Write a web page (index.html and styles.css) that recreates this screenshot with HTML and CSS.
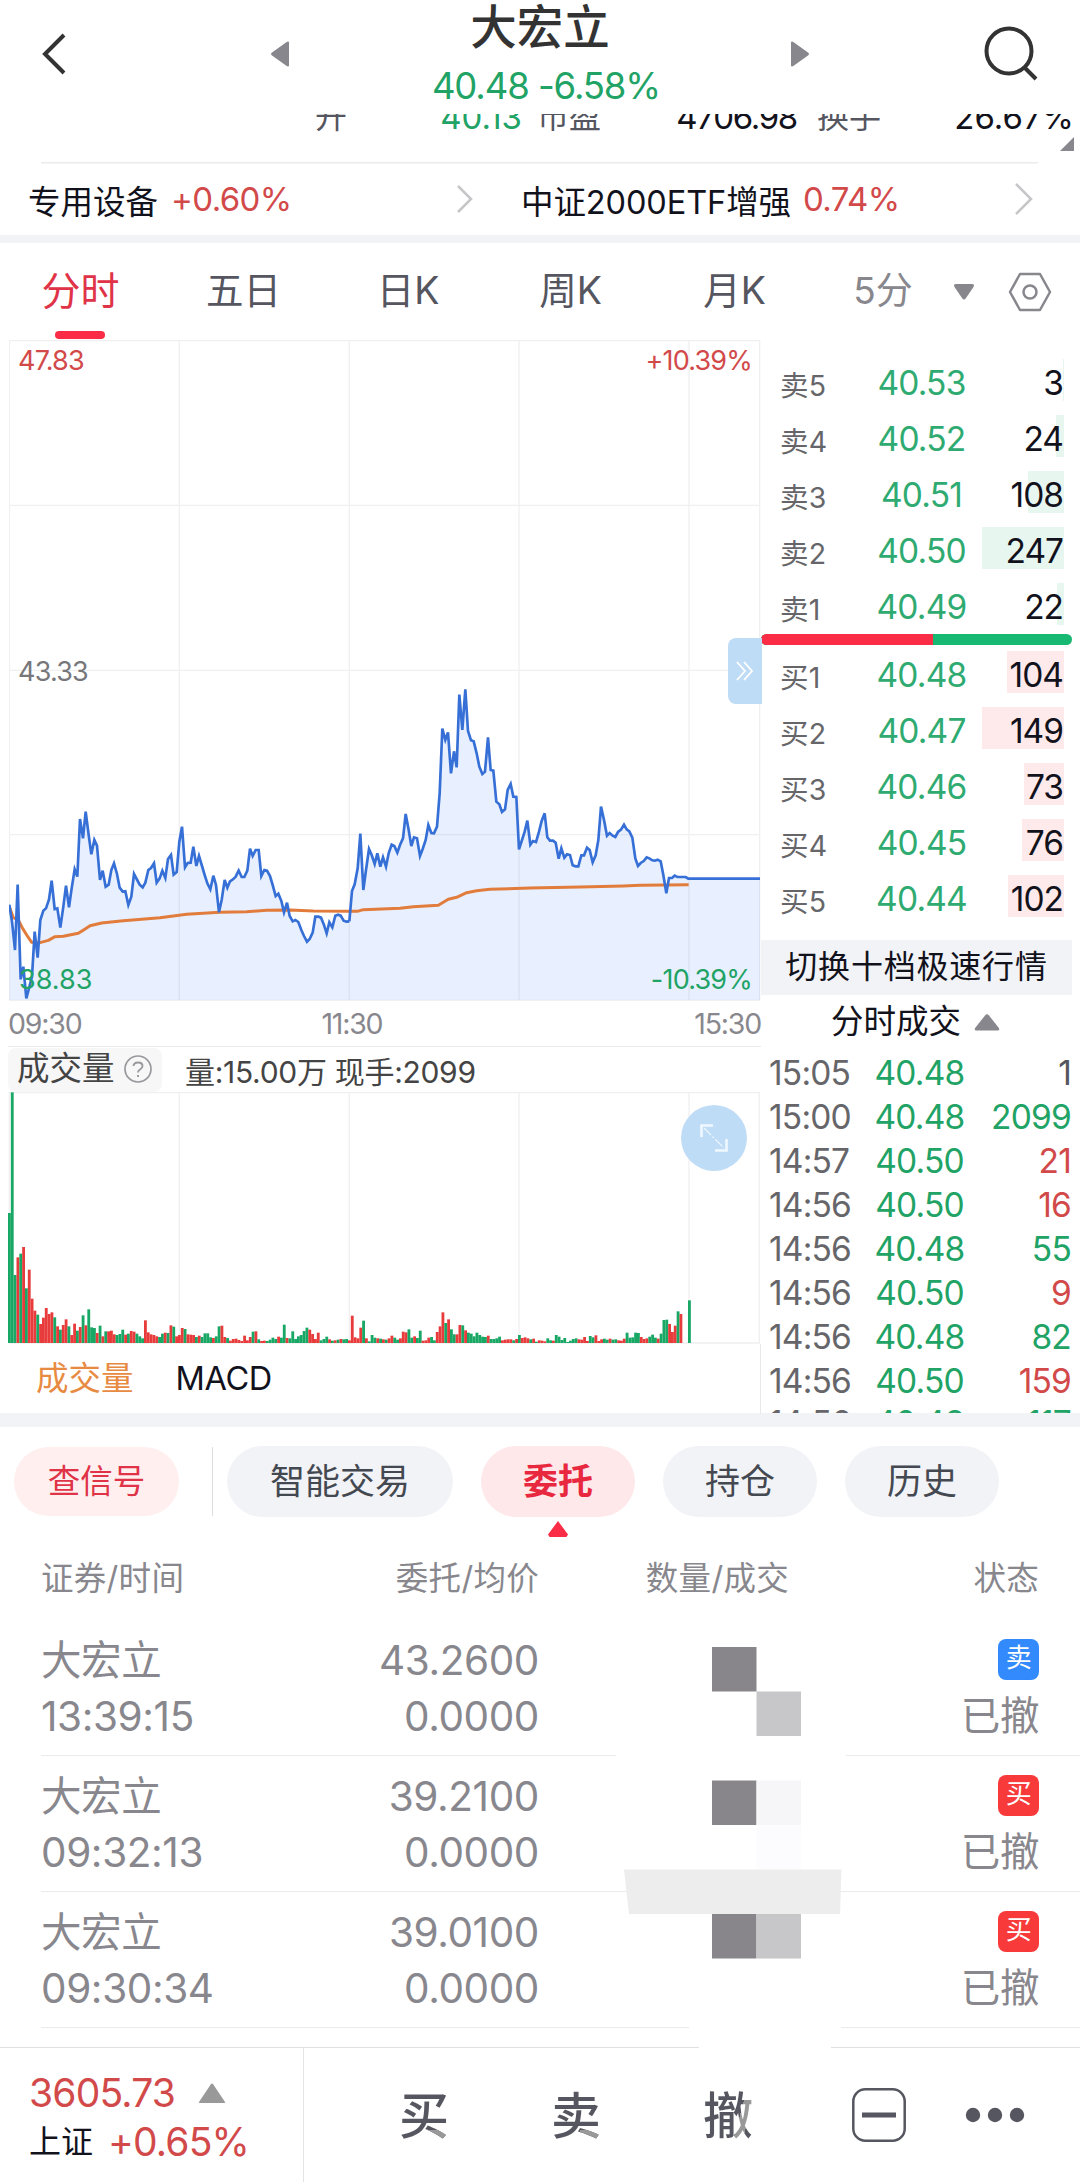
FILE: index.html
```html
<!DOCTYPE html>
<html lang="zh-CN">

<head>
    <meta charset="UTF-8">
    <meta name="viewport" content="width=device-width, initial-scale=1.0">
    <title>大宏立</title>
    <link rel="stylesheet" href="styles.css">
</head>

<body>
    <header class="header">
        <svg class="back" width="30" height="44" viewBox="0 0 30 44"><path d="M25 3 L6 22 L25 41" fill="none" stroke="#333" stroke-width="4"/></svg>
        <svg class="prev" width="20" height="28" viewBox="0 0 20 28"><path d="M19 2 V26 Q18 27 16 25.500 L2 15.500 Q0 14 2 12.500 L16 2.500 Q18 1 19 2Z" fill="#88878d"/></svg>
        <div class="title">
            <h1>大宏立</h1>
            <div class="quote green">40.48 -6.58%</div>
        </div>
        <svg class="next" width="20" height="28" viewBox="0 0 20 28"><path d="M1 2 V26 Q2 27 4 25.500 L18 15.500 Q20 14 18 12.500 L4 2.500 Q2 1 1 2Z" fill="#88878d"/></svg>
        <svg class="search" width="56" height="56" viewBox="0 0 56 56"><circle cx="26" cy="26" r="22.500" fill="none" stroke="#333" stroke-width="4"/><path d="M41 42 L53 54" stroke="#333" stroke-width="4"/></svg>
    </header>

    <!-- row scrolled half under the header -->
    <div class="stats">
        <span class="s-label">开</span>
        <span class="s-val green">40.13</span>
        <span class="s-label pe">市盈</span>
        <span class="s-val long">4706.98</span>
        <span class="s-label turn">换手</span>
        <span class="s-val last">26.67%</span>
        <i class="corner"></i>
    </div>

    <div class="sectors">
        <div class="sector">
            <span>专用设备</span><b class="red sec-a">+0.60%</b>
            <svg width="18" height="32" viewBox="0 0 18 32"><path d="M2 3 L15 16 L2 29" fill="none" stroke="#c6c6c8" stroke-width="2.500"/></svg>
        </div>
        <div class="sector etf">
            <span>中证2000ETF增强</span><b class="red">0.74%</b>
            <svg width="19" height="34" viewBox="0 0 19 34"><path d="M2 2 L17 17 L2 32" fill="none" stroke="#c6c6c8" stroke-width="2.500"/></svg>
        </div>
    </div>

    <nav class="periods">
        <a class="active">分时</a>
        <a>五日</a>
        <a>日K</a>
        <a>周K</a>
        <a>月K</a>
        <a class="minute">5分</a>
        <svg class="drop" width="22" height="18" viewBox="0 0 22 18"><path d="M3 1 H19 Q22 1 20.500 4 L13 15 Q11 18 9 15 L1.500 4 Q0 1 3 1Z" fill="#88878d"/></svg>
        <svg class="gear" width="44" height="40" viewBox="0 0 44 40"><path d="M12 2 H32 L42 20 L32 38 H12 L2 20Z" fill="none" stroke="#88878d" stroke-width="2.500" stroke-linejoin="round"/><circle cx="22" cy="20" r="6.500" fill="none" stroke="#88878d" stroke-width="2.500"/></svg>
    </nav>

    <main class="market">
        <section class="charts">
            <div class="price-chart">
                <svg id="price" width="752" height="661" viewBox="27 0 2256 1983">
                    <g class="grid">
                        <path d="M28 1.500 H2280 M28 496 H2280 M28 991 H2280 M28 1484 H2280 M28 1981 H2280"/>
                        <path d="M28.500 0 V1983 M538 0 V1983 M1048 0 V1983 M1557 0 V1983 M2067 0 V1983 M2279 0 V1983"/>
                    </g>
                </svg>
                <span class="lbl top-l red">47.83</span>
                <span class="lbl top-r red">+10.39%</span>
                <span class="lbl mid-l">43.33</span>
                <span class="lbl bot-l green">38.83</span>
                <span class="lbl bot-r green">-10.39%</span>
                <div class="fold"><svg width="20" height="20" viewBox="0 0 20 20"><path d="M2 1 L10 10 L2 19 M9 1 L17 10 L9 19" fill="none" stroke="#fff" stroke-width="1.800"/></svg></div>
            </div>
            <div class="times"><span>09:30</span><span class="noon">11:30</span><span>15:30</span></div>
            <div class="vol-head">
                <div class="chip">成交量<svg width="28" height="28" viewBox="0 0 28 28"><circle cx="14" cy="14" r="13" fill="none" stroke="#99989c" stroke-width="1.700"/><path d="M9.500 11 Q9.500 7.500 14 7.500 Q18.500 7.500 18.500 11 Q18.500 13 16 14.500 Q14 15.700 14 17.500 M14 20 V22" fill="none" stroke="#99989c" stroke-width="1.900"/></svg></div>
                <span>量:15.00万 现手:2099</span>
            </div>
            <div class="vol-chart">
                <svg id="volume" width="752" height="252" viewBox="24 0 2256 756">
                    <path class="grid" d="M28 2 H2280 M28 753 H2280 M28 0 V754 M538 0 V754 M1048 0 V754 M1557 0 V754 M2067 0 V754 M2278 0 V754"/>
                </svg>
                <div class="expand"><svg width="32" height="32" viewBox="0 0 32 32"><path d="M15 3.500 H3.500 V15 M17 28.500 H28.500 V17" fill="none" stroke="#f0f8ff" stroke-width="2.600"/><path d="M6 6 L26 26" stroke="#f0f8ff" stroke-width="1.200" stroke-dasharray="10 2 2 2"/></svg></div>
            </div>
            <div class="indicators"><span class="orange">成交量</span><span>MACD</span></div>
        </section>

        <aside class="depth">
            <div class="levels">
                <div class="level sell"><span>卖5</span><b>40.53</b><em><i style="width:1px"></i>3</em></div>
                <div class="level sell"><span>卖4</span><b>40.52</b><em><i style="width:8px"></i>24</em></div>
                <div class="level sell"><span>卖3</span><b>40.51</b><em><i style="width:36px"></i>108</em></div>
                <div class="level sell"><span>卖2</span><b>40.50</b><em><i style="width:82px"></i>247</em></div>
                <div class="level sell"><span>卖1</span><b>40.49</b><em><i style="width:7px"></i>22</em></div>
            </div>
            <div class="ratio"><i></i></div>
            <div class="levels">
                <div class="level buy"><span>买1</span><b>40.48</b><em><i style="width:57px"></i>104</em></div>
                <div class="level buy"><span>买2</span><b>40.47</b><em><i style="width:82px"></i>149</em></div>
                <div class="level buy"><span>买3</span><b>40.46</b><em><i style="width:40px"></i>73</em></div>
                <div class="level buy"><span>买4</span><b>40.45</b><em><i style="width:42px"></i>76</em></div>
                <div class="level buy"><span>买5</span><b>40.44</b><em><i style="width:56px"></i>102</em></div>
            </div>
            <div class="switch">切换十档极速行情</div>
            <div class="ticks-title">分时成交<svg width="26" height="18" viewBox="0 0 26 18"><path d="M2.500 17.500 Q-.5 17.500 1.500 14.500 L11 2.500 Q13 0 15 2.500 L24.500 14.500 Q26.500 17.500 23.500 17.500Z" fill="#88878d"/></svg></div>
            <div class="ticks">
                <div class="tick"><span>15:05</span><b>40.48</b><em class="gray">1</em></div>
                <div class="tick"><span>15:00</span><b>40.48</b><em class="green">2099</em></div>
                <div class="tick"><span>14:57</span><b>40.50</b><em class="red">21</em></div>
                <div class="tick"><span>14:56</span><b>40.50</b><em class="red">16</em></div>
                <div class="tick"><span>14:56</span><b>40.48</b><em class="green">55</em></div>
                <div class="tick"><span>14:56</span><b>40.50</b><em class="red">9</em></div>
                <div class="tick"><span>14:56</span><b>40.48</b><em class="green">82</em></div>
                <div class="tick"><span>14:56</span><b>40.50</b><em class="red">159</em></div>
                <div class="tick"><span>14:56</span><b>40.48</b><em class="green">117</em></div>
            </div>
        </aside>
    </main>

    <nav class="trade-tabs">
        <a class="signal">查信号</a>
        <i class="sep"></i>
        <a class="wide">智能交易</a>
        <a class="active">委托</a>
        <a>持仓</a>
        <a>历史</a>
    </nav>

    <section class="orders">
        <div class="row head"><span>证券/时间</span><span class="r">委托/均价</span><span class="c">数量/成交</span><span class="r">状态</span></div>
        <div class="row">
            <div>大宏立<br>13:39:15</div>
            <div class="r">43.2600<br>0.0000</div>
            <div></div>
            <div class="r state"><i class="badge blue">卖</i>已撤</div>
        </div>
        <div class="row">
            <div>大宏立<br>09:32:13</div>
            <div class="r">39.2100<br>0.0000</div>
            <div></div>
            <div class="r state"><i class="badge">买</i>已撤</div>
        </div>
        <div class="row">
            <div>大宏立<br>09:30:34</div>
            <div class="r">39.0100<br>0.0000</div>
            <div></div>
            <div class="r state"><i class="badge">买</i>已撤</div>
        </div>
        <!-- blocks hiding the quantities -->
        <svg class="mosaic" width="230" height="422" viewBox="616 1640 230 422">
            <path fill="#fff" d="M616 1640 H846 V1780 H616Z M689 2020 H841 V2035 H689Z M699 2040 H831 V2062 H699Z"/>
            <path fill="#88868b" d="M712 1647 H756.500 V1691.500 H712Z M712 1780.500 H756.500 V1825 H712Z M712 1914 H756.500 V1958.500 H712Z"/>
            <path fill="#c7c6c8" d="M756.500 1691.500 H801 V1736 H756.500Z M756.500 1914 H801 V1958.500 H756.500Z"/>
            <path fill="#f6f6f9" d="M756.500 1780.500 H801 V1825 H756.500Z"/>
            <path fill="#fcfbfe" d="M756.500 1825 H801 V1869.500 H756.500Z"/>
            <path fill="#ededed" d="M624 1869.500 H841.500 L840 1914 H629Z"/>
        </svg>
    </section>

    <footer class="bottom">
        <div class="index">
            <div class="red">3605.73 <svg width="28" height="20" viewBox="0 0 28 20"><path d="M1 19 L13 1 Q14 0 15 1 L27 19 Q28 20 26 20 H2 Q0 20 1 19Z" fill="#999"/></svg></div>
            <div class="red pct"><span>上证</span>+0.65%</div>
        </div>
        <div class="actions">
            <a class="glyph">买</a>
            <a class="glyph">卖</a>
            <a class="glyph che">撤</a>
            <svg class="minus" width="54" height="54" viewBox="0 0 54 54"><rect x="1.300" y="1.300" width="51.400" height="51.400" rx="12" fill="none" stroke="#55565f" stroke-width="2.500"/><path d="M10 27 H44" stroke="#55565f" stroke-width="5"/></svg>
            <svg class="dots" width="60" height="16" viewBox="0 0 60 16"><g fill="#55565f"><circle cx="8" cy="8" r="7.200"/><circle cx="30" cy="8" r="7.200"/><circle cx="52" cy="8" r="7.200"/></g></svg>
        </div>
    </footer>

    <script src="chart.js"></script>
</body>

</html>
```

FILE: styles.css
```css
* {
    box-sizing: border-box;
}

body {
    margin: 0;
    background-color: #fff;
    color: #12121c;
    font-family: Inter, 'Noto Sans CJK SC', sans-serif;
    font-weight: 400;
    width: 1080px;
    height: 2182px;
    overflow: hidden;
}

b,
em,
i,
h1 {
    font-weight: 400;
    font-style: normal;
    margin: 0;
}

svg {
    display: block;
    flex: none;
}

.green {
    color: #21a366;
}

.red {
    color: #d2494a;
}

.gray {
    color: #55565f;
}

.orange {
    color: #e88b42;
}

/* header */
.header {
    height: 114px;
    display: flex;
    align-items: flex-start;
    padding-left: 39px;
}

.back {
    margin-top: 32px;
}

.prev {
    margin: 40px 0 0 201px;
}

.title {
    width: 500px;
    text-align: center;
}

.title h1 {
    font-size: 46.500px;
    line-height: 54px;
    font-weight: 500;
    color: #333;
}

.quote {
    font-size: 36.500px;
    line-height: 65px;
    letter-spacing: -1.1px;
    padding-left: 12px;
}

.next {
    margin-top: 40px;
}

.search {
    margin: 25px 0 0 173px;
}

.stats {
    position: relative;
    height: 48px;
    display: grid;
    grid-template-columns: 34px 175px 79px 196px 84px 1fr;
    padding: 0 6px 0 313px;
    font-size: 33px;
    overflow: hidden;
}

.stats span {
    line-height: 40px;
    margin-top: -17px;
    height: 40px;
    text-align: right;
}

.stats .s-label {
    color: #55565f;
    font-size: 32px;
}

.stats .long {
    letter-spacing: -1.3px;
}

.corner {
    position: absolute;
    right: 6px;
    top: 23px;
    border-left: 14px solid transparent;
    border-bottom: 14px solid #88878d;
}

.sectors {
    height: 73px;
    margin: 0 42px 0 28px;
    display: flex;
    background: linear-gradient(#ebebeb, #ebebeb) 13px 0 / 997px 1.500px no-repeat;
}

.sector {
    display: flex;
    align-items: center;
    width: 493px;
    font-size: 32.500px;
    padding: 1px 47px 0 0;
}

.sector b {
    font-size: 33px;
    margin-left: 13px;
    letter-spacing: -0.6px;
}

.sector svg {
    margin-left: auto;
}

.sector.etf {
    flex: 1;
    padding-right: 5px;
    font-size: 32.500px;
    letter-spacing: -0.1px;
}

.etf b {
    margin-left: 12px;
}

.periods {
    height: 105px;
    border-top: 8px solid #f2f3f7;
    position: relative;
    display: grid;
    grid-template-columns: 159px 167px 162px 163px 165px 112px 60px 50px;
    padding-left: 1px;
    align-items: center;
    justify-items: center;
    font-size: 37.500px;
    color: #55565f;
}

.periods a {
    line-height: 50px;
    margin-top: -2px;
}

.periods .active {
    position: relative;
    color: #e03347;
    font-size: 39px;
}

.periods .active::after {
    content: '';
    position: absolute;
    left: 14px;
    top: 65px;
    width: 50px;
    height: 8px;
    border-radius: 4px;
    background-color: #fb2c45;
}

.periods .minute {
    color: #88878d;
    padding-left: 20px;
    font-size: 37px;
    white-space: nowrap;
}

.periods .drop {
    margin-left: 10px;
}

.periods .gear {
    margin-left: 32px;
}

/* charts */
.market {
    height: 1074px;
    display: grid;
    grid-template-columns: 761px 1fr;
}

.charts {
    padding-left: 9px;
    background: linear-gradient(#e8e8ea, #e8e8ea) 760px 100% / 1px 70px no-repeat;
}

.price-chart {
    position: relative;
    height: 661px;
}

.grid {
    fill: none;
    stroke: #f0f0f1;
    stroke-width: 4;
}

.area {
    fill: rgba(30, 110, 255, 0.1);
}

.line {
    fill: none;
    stroke: #3670d6;
    stroke-width: 8;
    stroke-linejoin: miter;
}

.avg {
    fill: none;
    stroke: #e17c3c;
    stroke-width: 9;
    stroke-linejoin: round;
}

.lbl {
    position: absolute;
    font-size: 27px;
    line-height: 30px;
    letter-spacing: -0.8px;
}

.top-l {
    left: 9px;
    top: 6px;
}

.top-r {
    right: 9px;
    top: 6px;
}

.mid-l {
    left: 9px;
    top: 317px;
    color: #77777b;
}

.bot-l {
    left: 10px;
    top: 625px;
    letter-spacing: 0;
}

.bot-r {
    right: 9px;
    top: 625px;
}

.fold {
    position: absolute;
    right: -1px;
    top: 298px;
    width: 34px;
    height: 66px;
    border-radius: 8px 0 0 8px;
    background-color: #bfdcf6;
    display: flex;
    align-items: center;
    justify-content: center;
}

.times {
    height: 46px;
    display: flex;
    justify-content: space-between;
    align-items: center;
    color: #88878d;
    font-size: 28.500px;
    letter-spacing: -1.2px;
    margin-left: -1px;
    border-bottom: 1px solid #ebebed;
}

.noon {
    margin-right: 72px;
}

.vol-head {
    height: 45px;
    display: flex;
    align-items: center;
    gap: 23px;
    font-size: 30px;
    color: #444;
    letter-spacing: -0.3px;
    margin-left: -1px;
}

.chip {
    width: 154px;
    height: 44px;
    padding-left: 9px;
    border-radius: 8px;
    background-color: #f7f7f8;
    display: flex;
    align-items: center;
    gap: 9px;
    font-size: 32.500px;
    letter-spacing: 0;
    line-height: 40px;
    padding-bottom: 2px;
}

.vol-chart {
    position: relative;
    height: 252px;
    margin-left: -1px;
}

.up {
    fill: #e83c3c;
}

.down {
    fill: #19a765;
}

.expand {
    position: absolute;
    left: 673px;
    top: 13px;
    width: 66px;
    height: 66px;
    border-radius: 50%;
    background-color: #bfdcf6;
    display: flex;
    align-items: center;
    justify-content: center;
}

.indicators {
    display: flex;
    gap: 42px;
    padding: 13px 0 0 27px;
    font-size: 32.500px;
    line-height: 44px;
}

.indicators span + span {
    letter-spacing: -0.4px;
}

/* order book */
.depth {
    height: 1073px;
    padding: 15px 8px 0 0;
    overflow: hidden;
}

.level {
    height: 56px;
    display: grid;
    grid-template-columns: 63px 157px 63px;
    align-items: center;
    padding-left: 19px;
}

.level span {
    color: #66666a;
    font-size: 28.500px;
    letter-spacing: 0.3px;
}

.level b {
    color: #2fab72;
    font-size: 33.500px;
    letter-spacing: -0.8px;
    text-align: center;
}

.level em {
    position: relative;
    text-align: right;
    font-size: 33.500px;
    letter-spacing: -1px;
    line-height: 42px;
    height: 42px;
}

.level em i {
    position: absolute;
    right: -1px;
    top: -3px;
    height: 42px;
    z-index: -1;
}

.sell i {
    background-color: #e8f6f0;
}

.buy i {
    background-color: #feeaea;
}

.ratio {
    height: 11px;
    border-radius: 6px;
    background-color: #17b871;
    overflow: hidden;
    margin: -1px 0 2px;
}

.ratio i {
    display: block;
    width: 172px;
    height: 100%;
    background-color: #fb2c45;
}

.switch {
    margin-top: 13px;
    height: 55px;
    line-height: 54px;
    background-color: #f2f3f7;
    text-align: center;
    font-size: 32px;
    letter-spacing: 0.8px;
}

.ticks-title {
    height: 56px;
    display: flex;
    justify-content: center;
    align-items: center;
    gap: 13px;
    font-size: 32.500px;
    line-height: 40px;
    padding: 0 2px 3px 0;
}

.tick {
    height: 44px;
    display: grid;
    grid-template-columns: 96px 109px 1fr;
    align-items: center;
    padding: 0 1px 0 8px;
    font-size: 33.500px;
    letter-spacing: -0.8px;
}

.tick:last-child {
    margin-top: -2px;
}

.tick span {
    color: #66666a;
}

.tick b {
    color: #21a366;
    text-align: center;
}

.tick em {
    text-align: right;
}

/* trade tabs */
.trade-tabs {
    height: 130px;
    border-top: 14px solid #f2f3f7;
    margin-top: -1px;
    padding: 19px 14px 0;
    display: flex;
    font-size: 35px;
    color: #444850;
}

.trade-tabs a {
    position: relative;
    width: 154px;
    height: 71px;
    line-height: 70px;
    border-radius: 36px;
    background-color: #f2f3f7;
    text-align: center;
    margin-right: 28px;
}

.trade-tabs .wide {
    width: 226px;
}

.trade-tabs .signal {
    width: 165px;
    height: 69px;
    margin: 1px 33px 0 0;
    background-color: #ffefef;
    color: #e03347;
    font-size: 32.500px;
}

.sep {
    width: 1px;
    height: 69px;
    margin: 1px 14px 0 0;
    background-color: #ddd;
}

.trade-tabs .active {
    background-color: #ffe8ea;
    color: #e8283f;
    font-weight: 700;
}

.trade-tabs .active::after {
    content: '';
    position: absolute;
    left: 67px;
    top: 75px;
    width: 20px;
    height: 16px;
    background-color: #fb2c45;
    clip-path: polygon(50% 0, 100% 85%, 92% 100%, 8% 100%, 0 85%);
}

/* orders */
.orders {
    position: relative;
    height: 504px;
    color: #88878d;
    padding-left: 41px;
}

.row {
    height: 136px;
    border-bottom: 1.500px solid #ebebed;
    display: grid;
    grid-template-columns: 250px 248px 250px 250px;
    font-size: 40.500px;
    line-height: 56px;
    padding-top: 13px;
    letter-spacing: -0.4px;
}

.row.head {
    height: 77px;
    border: none;
    font-size: 32.500px;
    line-height: 46px;
    padding-top: 13px;
    letter-spacing: 0.3px;
}

.row .r {
    text-align: right;
}

.row .c {
    text-align: right;
}

.row .state {
    position: relative;
    padding-top: 55px;
    font-size: 39.500px;
}

.badge {
    position: absolute;
    right: 0;
    top: 6px;
    width: 41px;
    height: 41px;
    line-height: 38px;
    border-radius: 8px;
    background-color: #f83a3b;
    color: #fff;
    font-size: 26px;
    text-align: center;
}

.badge.blue {
    background-color: #338afd;
}

.mosaic {
    position: absolute;
    left: 616px;
    top: 97px;
    z-index: 2;
}

/* bottom bar */
.bottom {
    height: 135px;
    display: flex;
    border-top: 1.500px solid #e0e0e2;
}

.index {
    width: 304px;
    padding: 20px 0 0 29px;
    border-right: 1px solid #e4e4e6;
    font-size: 39px;
    line-height: 49px;
}

.index div {
    display: flex;
    align-items: center;
    gap: 23px;
    letter-spacing: -0.8px;
}

.index .pct {
    gap: 15px;
}

.pct span {
    color: #12121c;
    font-size: 32px;
    letter-spacing: 0;
}

.actions {
    flex: 1;
    display: flex;
    align-items: center;
    padding-left: 95px;
}

.glyph {
    width: 50px;
    margin-right: 102px;
    font-size: 50px;
    line-height: 60px;
    padding-top: 2px;
    font-weight: 500;
    color: transparent;
    background: linear-gradient(#999, #999) 100% 46px / 42% 30% no-repeat, #55565f;
    -webkit-background-clip: text;
    background-clip: text;
}

.glyph.che {
    margin-right: 99px;
    background: linear-gradient(105deg, #55565f 68%, #999 68%, #999 82%, #55565f 82%);
    -webkit-background-clip: text;
    background-clip: text;
}

.dots {
    margin-left: 59px;
}
```

FILE: chart.js
```js
const NS = 'http://www.w3.org/2000/svg';

// one point per minute, x y
const morning = '28,374 36,425 45,510 53,314 62,598 70,560 79,655 87,625 96,590 104,455 113,533 121,420 130,392 138,385 147,358 155,302 164,387 172,385 181,443 190,380 198,317 207,382 215,325 224,268 232,290 240,117 249,175 257,95 266,165 274,223 283,180 291,197 300,300 308,272 317,320 326,314 334,270 342,250 351,282 359,323 368,335 376,334 385,375 394,350 402,282 410,297 419,314 428,322 436,308 445,270 453,264 462,250 470,308 479,295 487,272 496,294 504,237 513,225 521,284 530,276 538,185 546,140 555,262 563,249 572,248 580,200 589,258 597,228 606,258 614,285 622,310 631,328 640,287 648,315 657,397 665,360 674,300 682,323 690,304 699,298 707,290 716,272 725,291 733,291 742,272 750,206 758,228 767,210 776,210 784,288 793,270 801,272 810,288 818,315 827,348 835,341 844,363 852,397 861,368 869,408 878,424 886,420 895,426 904,450 912,468 921,485 929,477 938,458 946,410 955,410 963,413 972,435 980,460 988,427 997,442 1006,407 1014,404 1022,407 1031,422 1039,425 1048,424';
const afternoon = '28,784 36,693 44,673 53,625 61,521 70,690 78,630 87,567 95,585 104,612 112,580 121,620 129,592 138,620 146,580 155,554 163,558 172,578 180,555 189,535 197,462 206,510 214,558 222,532 231,535 240,588 248,567 257,540 265,495 274,519 282,520 291,500 299,400 307,206 316,240 324,217 333,340 342,274 350,322 358,104 367,210 376,88 384,213 393,241 401,244 410,280 418,320 427,342 435,335 444,232 452,330 460,332 469,425 478,433 486,456 495,448 503,390 512,372 520,410 529,411 537,568 546,540 554,515 562,482 571,554 579,543 588,546 597,515 605,483 614,460 622,532 630,542 639,542 647,548 656,596 664,565 673,593 681,583 690,585 698,616 707,619 715,619 724,586 732,586 741,563 749,570 758,607 767,586 775,540 783,440 792,480 801,527 809,519 818,527 826,531 834,516 843,509 852,494 860,508 868,514 877,533 886,595 894,618 902,609 911,603 920,592 928,595 937,601 945,602 953,599 962,604 970,645 979,700 987,654 996,654 1004,647 1012,651 1037,651 1045,656 1260,656';
const morningAvg = '28,380 40,413 55,420 65,440 80,465 95,487 120,488 145,481 165,470 190,469 235,460 252,449 270,437 305,429 370,422 480,413 560,403 660,397 740,395 800,391 870,390 940,393 1048,394';
const afternoonAvg = '28,754 52,754 70,749 180,745 220,740 295,736 325,718 350,712 380,698 410,692 450,688 570,684 720,681 850,678 900,676 1046,674';

function add(parent, tag, attrs) {
    const el = document.createElementNS(NS, tag);
    for (const key in attrs) el.setAttribute(key, attrs[key]);
    parent.appendChild(el);
    return el;
}

function drawSession(points, avg, dx, dy) {
    const g = add(document.getElementById('price'), 'g', { transform: `translate(${dx} ${dy})` });
    const list = points.split(' ');
    const first = list[0].split(',')[0];
    const last = list[list.length - 1].split(',')[0];
    const bottom = 1980 - dy;
    add(g, 'polygon', { class: 'area', points: `${first},${bottom} ${points} ${last},${bottom}` });
    add(g, 'polyline', { class: 'avg', points: avg });
    add(g, 'polyline', { class: 'line', points: points });
}

drawSession(morning, morningAvg, 0, 1320);
drawSession(afternoon, afternoonAvg, 1020, 960);

// volume per minute, r = up, g = down
const volume = 'g390 g752 g204 r257 g268 r288 g164 r220 r133 r97 g85 r57 r76 r105 r87 r92 g77 r50 g40 r54 r71 g50 r24 r58 g37 r48 g83 r53 g101 g47 g45 r30 g52 r20 g35 r35 r37 r26 g24 g27 g40 r25 g28 r36 r34 g28 g20 g14 r68 r32 r26 r24 r20 g18 g28 r31 g30 r53 g49 r20 r24 r45 g42 r26 r25 r24 g18 r22 g18 g29 g29 g17 r15 g20 g50 r52 r18 g15 r7 r12 r13 r9 r6 r22 r8 r18 g34 r35 g11 r6 r7 g6 g10 g16 g12 r19 g16 g55 r15 g14 g35 g12 g20 g24 g36 g46 r40 r27 r12 r31 g8 g12 g19 r11 g7 r8 g10 r12 g11 g12 r8 r82 r17 r14 r46 g67 r14 g5 g24 g16 r14 g13 r11 g10 r14 r22 g16 g10 r14 r34 r32 g41 g16 r20 g15 g37 r7 r8 r16 g18 g8 r33 r50 r92 g60 r71 g41 g26 r26 r54 g53 r38 g31 g28 g20 g31 g24 g19 g18 r22 g12 g12 g14 g19 r8 r10 r11 r11 g8 r12 g24 r15 r17 r14 g11 r13 g4 r8 r7 r5 g14 g8 r7 g24 g19 g9 g15 g3 g7 g12 g14 r11 r10 r18 r6 g21 g17 r23 r6 r11 g13 g10 r13 g10 g11 r8 r7 r13 g31 g16 g17 g31 g30 r18 r12 r14 g19 g25 g16 r13 g28 g69 g70 r57 r33 r52 g95 r87 g0 g0 g128';

volume.split(' ').forEach((v, i) => {
    const h = Number(v.slice(1));
    add(document.getElementById('volume'), 'rect', {
        class: v[0] === 'r' ? 'up' : 'down',
        x: 24 + i * 8.5,
        y: 753 - h,
        width: 8.5,
        height: h
    });
});
```
